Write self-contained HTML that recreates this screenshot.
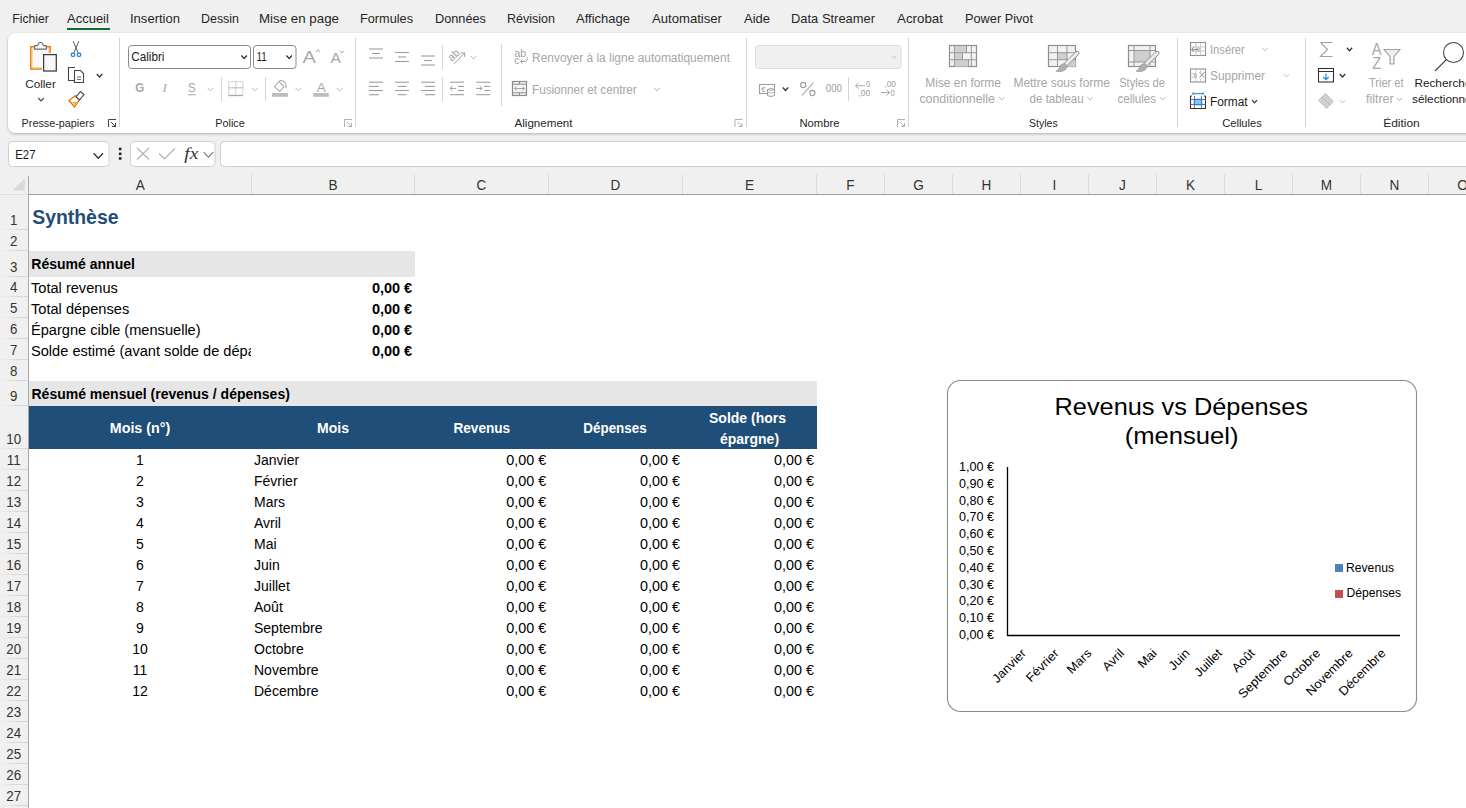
<!DOCTYPE html>
<html><head><meta charset="utf-8"><title>Excel</title>
<style>html,body{margin:0;padding:0;background:#f0f0f0;overflow:hidden}svg{display:block;font-family:"Liberation Sans",sans-serif}</style>
</head><body>
<svg width="1466" height="808" viewBox="0 0 1466 808">
<rect x="0" y="0" width="1466" height="808" fill="#f0f0f0" />
<text x="12.3" y="22.9" font-size="12.6" fill="#262626" textLength="36.4" lengthAdjust="spacingAndGlyphs" >Fichier</text>
<text x="67.1" y="22.9" font-size="12.6" fill="#262626" textLength="41.8" lengthAdjust="spacingAndGlyphs" >Accueil</text>
<text x="130.0" y="22.9" font-size="12.6" fill="#262626" textLength="50.0" lengthAdjust="spacingAndGlyphs" >Insertion</text>
<text x="201.0" y="22.9" font-size="12.6" fill="#262626" textLength="38.0" lengthAdjust="spacingAndGlyphs" >Dessin</text>
<text x="259.0" y="22.9" font-size="12.6" fill="#262626" textLength="80.0" lengthAdjust="spacingAndGlyphs" >Mise en page</text>
<text x="360.0" y="22.9" font-size="12.6" fill="#262626" textLength="53.0" lengthAdjust="spacingAndGlyphs" >Formules</text>
<text x="435.0" y="22.9" font-size="12.6" fill="#262626" textLength="51.0" lengthAdjust="spacingAndGlyphs" >Données</text>
<text x="507.0" y="22.9" font-size="12.6" fill="#262626" textLength="48.0" lengthAdjust="spacingAndGlyphs" >Révision</text>
<text x="576.0" y="22.9" font-size="12.6" fill="#262626" textLength="54.0" lengthAdjust="spacingAndGlyphs" >Affichage</text>
<text x="652.0" y="22.9" font-size="12.6" fill="#262626" textLength="70.0" lengthAdjust="spacingAndGlyphs" >Automatiser</text>
<text x="744.0" y="22.9" font-size="12.6" fill="#262626" textLength="26.0" lengthAdjust="spacingAndGlyphs" >Aide</text>
<text x="791.0" y="22.9" font-size="12.6" fill="#262626" textLength="84.0" lengthAdjust="spacingAndGlyphs" >Data Streamer</text>
<text x="897.0" y="22.9" font-size="12.6" fill="#262626" textLength="46.0" lengthAdjust="spacingAndGlyphs" >Acrobat</text>
<text x="965.0" y="22.9" font-size="12.6" fill="#262626" textLength="68.0" lengthAdjust="spacingAndGlyphs" >Power Pivot</text>
<rect x="67" y="28" width="43" height="2" fill="#0f6b32" />
<defs><filter id="sh" x="-5%" y="-20%" width="110%" height="150%"><feGaussianBlur in="SourceAlpha" stdDeviation="1.6"/><feOffset dy="1.2"/><feComponentTransfer><feFuncA type="linear" slope="0.28"/></feComponentTransfer><feMerge><feMergeNode/><feMergeNode in="SourceGraphic"/></feMerge></filter></defs>
<defs><linearGradient id="rg" x1="0" x2="1" y1="0" y2="0"><stop offset="0" stop-color="#f0f0f0"/><stop offset="0.6" stop-color="#dadada"/><stop offset="1" stop-color="#d6d6d6"/></linearGradient></defs>
<rect x="8" y="33" width="1480" height="100" rx="8" ry="8" fill="#fff" filter="url(#sh)"/>
<line x1="119.5" y1="38" x2="119.5" y2="127" stroke="#d4d4d4" stroke-width="1" />
<line x1="355.5" y1="38" x2="355.5" y2="127" stroke="#d4d4d4" stroke-width="1" />
<line x1="746.5" y1="38" x2="746.5" y2="127" stroke="#d4d4d4" stroke-width="1" />
<line x1="908.5" y1="38" x2="908.5" y2="127" stroke="#d4d4d4" stroke-width="1" />
<line x1="1177.5" y1="38" x2="1177.5" y2="127" stroke="#d4d4d4" stroke-width="1" />
<line x1="1305.5" y1="38" x2="1305.5" y2="127" stroke="#d4d4d4" stroke-width="1" />
<line x1="221.5" y1="77" x2="221.5" y2="101" stroke="#d4d4d4" stroke-width="1" />
<line x1="265.5" y1="77" x2="265.5" y2="101" stroke="#d4d4d4" stroke-width="1" />
<line x1="442.5" y1="45" x2="442.5" y2="69" stroke="#d4d4d4" stroke-width="1" />
<line x1="442.5" y1="77" x2="442.5" y2="101" stroke="#d4d4d4" stroke-width="1" />
<line x1="501.5" y1="44" x2="501.5" y2="106" stroke="#d4d4d4" stroke-width="1" />
<line x1="848.5" y1="77" x2="848.5" y2="101" stroke="#d4d4d4" stroke-width="1" />
<text x="21.6" y="126.7" font-size="10.6" fill="#262626" textLength="72.7" lengthAdjust="spacingAndGlyphs" >Presse-papiers</text>
<text x="215.2" y="126.7" font-size="10.6" fill="#262626" textLength="29.6" lengthAdjust="spacingAndGlyphs" >Police</text>
<text x="514.5" y="126.7" font-size="10.6" fill="#262626" textLength="58.0" lengthAdjust="spacingAndGlyphs" >Alignement</text>
<text x="799.5" y="126.7" font-size="10.6" fill="#262626" textLength="40.0" lengthAdjust="spacingAndGlyphs" >Nombre</text>
<text x="1029.1" y="126.7" font-size="10.6" fill="#262626" textLength="28.6" lengthAdjust="spacingAndGlyphs" >Styles</text>
<text x="1222.2" y="126.7" font-size="10.6" fill="#262626" textLength="39.6" lengthAdjust="spacingAndGlyphs" >Cellules</text>
<text x="1383.2" y="126.7" font-size="10.6" fill="#262626" textLength="36.6" lengthAdjust="spacingAndGlyphs" >Édition</text>
<path d="M108.5 127.0 L108.5 119.5 L116.0 119.5" stroke="#444" fill="none" stroke-width="1" />
<path d="M111.0 122.0 L115.5 126.5 M112.0 126.5 L115.5 126.5 L115.5 123.0" stroke="#444" fill="none" stroke-width="1" />
<path d="M344.5 127.0 L344.5 119.5 L352.0 119.5" stroke="#b0b0b0" fill="none" stroke-width="1" />
<path d="M347.0 122.0 L351.5 126.5 M348.0 126.5 L351.5 126.5 L351.5 123.0" stroke="#b0b0b0" fill="none" stroke-width="1" />
<path d="M735 127.0 L735 119.5 L742.5 119.5" stroke="#b0b0b0" fill="none" stroke-width="1" />
<path d="M737.5 122.0 L742 126.5 M738.5 126.5 L742 126.5 L742 123.0" stroke="#b0b0b0" fill="none" stroke-width="1" />
<path d="M897.5 127.0 L897.5 119.5 L905.0 119.5" stroke="#b0b0b0" fill="none" stroke-width="1" />
<path d="M900.0 122.0 L904.5 126.5 M901.0 126.5 L904.5 126.5 L904.5 123.0" stroke="#b0b0b0" fill="none" stroke-width="1" />
<rect x="30.1" y="46" width="20.7" height="23.7" fill="#e8720c" />
<rect x="31.3" y="47.2" width="18.3" height="21.3" fill="#f9d98c" />
<rect x="32.8" y="48.7" width="15.3" height="18.3" fill="#f8f8f8" />
<rect x="42" y="53" width="16" height="19.6" fill="#fff" />
<rect x="43.6" y="54.6" width="12.7" height="16.4" fill="#f8f8f8" stroke="#3a3a3a" stroke-width="1.25"/>
<path d="M34.6 45.6 H37.5 Q38.5 42.2 40.5 42.2 Q42.5 42.2 43.5 45.6 H46.3 V49.1 H34.6 Z" stroke="#6e6e6e" fill="#fafafa" stroke-width="1.1" />
<text x="25.2" y="87.6" font-size="11.6" fill="#262626" textLength="30.6" lengthAdjust="spacingAndGlyphs" >Coller</text>
<path d="M38.2 98.0 L41.0 101.0 L43.8 98.0" stroke="#444" fill="none" stroke-width="1.1" />
<path d="M73.2 41.2 L78 52.5 M78.8 41.2 L74 52.5" stroke="#555" fill="none" stroke-width="1" />
<circle cx="73" cy="54.8" r="1.8" fill="none" stroke="#2b88d8" stroke-width="1.3"/>
<circle cx="79" cy="54.8" r="1.8" fill="none" stroke="#2b88d8" stroke-width="1.3"/>
<path d="M75 67.5 H68.5 V80.5 H74" stroke="#444" fill="none" stroke-width="1.1" />
<path d="M74.5 70.5 H80.5 L83.5 73.5 V82.5 H74.5 Z" stroke="#444" fill="#fff" stroke-width="1.1" />
<path d="M77 77 H81 M77 79.5 H81" stroke="#555" fill="none" stroke-width="0.9" />
<path d="M96.8 74.0 L99.6 77.0 L102.3 74.0" stroke="#333" fill="none" stroke-width="1.3" />
<path d="M69 100.5 L74.5 107 L80 99 L75.5 95.5 Z" stroke="#e07000" fill="#fff" stroke-width="1.3" />
<path d="M72 102 L75 106 L78 101.5 Z" stroke="none" fill="#f6b24d" stroke-width="1" />
<path d="M76 97 L79.5 100 L84 94.5 L80.5 91.5 Z" stroke="#444" fill="#fff" stroke-width="1.1" />
<rect x="128.5" y="45.5" width="122" height="23" rx="3" fill="#fff" stroke="#8a8a8a" stroke-width="1"/>
<rect x="253.5" y="45.5" width="42.5" height="23" rx="3" fill="#fff" stroke="#8a8a8a" stroke-width="1"/>
<text x="131.2" y="60.7" font-size="12.6" fill="#1a1a1a" textLength="33.3" lengthAdjust="spacingAndGlyphs" >Calibri</text>
<text x="256.5" y="60.7" font-size="12.6" fill="#1a1a1a" textLength="10.3" lengthAdjust="spacingAndGlyphs" >11</text>
<path d="M241.4 55.5 L244.2 58.5 L246.9 55.5" stroke="#333" fill="none" stroke-width="1.3" />
<path d="M286.4 55.5 L289.2 58.5 L291.9 55.5" stroke="#333" fill="none" stroke-width="1.3" />
<text x="302.6" y="63.0" font-size="17" fill="#a8a8a8" textLength="13.4" lengthAdjust="spacingAndGlyphs" >A</text>
<path d="M316 52 L318 49.5 L320 52" stroke="#a8a8a8" fill="none" stroke-width="1" />
<text x="330.5" y="63.0" font-size="14" fill="#a8a8a8" textLength="10.5" lengthAdjust="spacingAndGlyphs" >A</text>
<path d="M340 50.5 L342 53 L344 50.5" stroke="#a8a8a8" fill="none" stroke-width="1" />
<text x="135.2" y="92.3" font-size="12.5" fill="#a8a8a8" font-weight="bold" textLength="9.0" lengthAdjust="spacingAndGlyphs" >G</text>
<text x="162.5" y="92.3" font-size="13" fill="#a8a8a8" font-family="Liberation Serif" font-style="italic">I</text>
<text x="188.0" y="92.3" font-size="12.5" fill="#a8a8a8" textLength="7.8" lengthAdjust="spacingAndGlyphs" >S</text>
<line x1="188" y1="94.8" x2="196" y2="94.8" stroke="#a8a8a8" stroke-width="1" />
<path d="M207.5 87.8 L210.5 90.8 L213.5 87.8" stroke="#b8b8b8" fill="none" stroke-width="1" />
<rect x="228.3" y="81.3" width="1" height="1" fill="#a8a8a8" />
<rect x="230.3" y="81.3" width="1" height="1" fill="#a8a8a8" />
<rect x="232.3" y="81.3" width="1" height="1" fill="#a8a8a8" />
<rect x="234.3" y="81.3" width="1" height="1" fill="#a8a8a8" />
<rect x="236.3" y="81.3" width="1" height="1" fill="#a8a8a8" />
<rect x="238.3" y="81.3" width="1" height="1" fill="#a8a8a8" />
<rect x="240.3" y="81.3" width="1" height="1" fill="#a8a8a8" />
<rect x="242.3" y="81.3" width="1" height="1" fill="#a8a8a8" />
<rect x="228.3" y="83.3" width="1" height="1" fill="#a8a8a8" />
<rect x="242.3" y="83.3" width="1" height="1" fill="#a8a8a8" />
<rect x="228.3" y="85.3" width="1" height="1" fill="#a8a8a8" />
<rect x="242.3" y="85.3" width="1" height="1" fill="#a8a8a8" />
<rect x="228.3" y="87.3" width="1" height="1" fill="#a8a8a8" />
<rect x="230.3" y="87.3" width="1" height="1" fill="#a8a8a8" />
<rect x="232.3" y="87.3" width="1" height="1" fill="#a8a8a8" />
<rect x="234.3" y="87.3" width="1" height="1" fill="#a8a8a8" />
<rect x="236.3" y="87.3" width="1" height="1" fill="#a8a8a8" />
<rect x="238.3" y="87.3" width="1" height="1" fill="#a8a8a8" />
<rect x="240.3" y="87.3" width="1" height="1" fill="#a8a8a8" />
<rect x="242.3" y="87.3" width="1" height="1" fill="#a8a8a8" />
<rect x="228.3" y="89.3" width="1" height="1" fill="#a8a8a8" />
<rect x="242.3" y="89.3" width="1" height="1" fill="#a8a8a8" />
<rect x="228.3" y="91.3" width="1" height="1" fill="#a8a8a8" />
<rect x="242.3" y="91.3" width="1" height="1" fill="#a8a8a8" />
<rect x="228.3" y="93.3" width="1" height="1" fill="#a8a8a8" />
<rect x="242.3" y="93.3" width="1" height="1" fill="#a8a8a8" />
<rect x="235.3" y="81.3" width="1" height="1" fill="#a8a8a8" />
<rect x="235.3" y="83.3" width="1" height="1" fill="#a8a8a8" />
<rect x="235.3" y="85.3" width="1" height="1" fill="#a8a8a8" />
<rect x="235.3" y="87.3" width="1" height="1" fill="#a8a8a8" />
<rect x="235.3" y="89.3" width="1" height="1" fill="#a8a8a8" />
<rect x="235.3" y="91.3" width="1" height="1" fill="#a8a8a8" />
<rect x="235.3" y="93.3" width="1" height="1" fill="#a8a8a8" />
<rect x="228.3" y="87.3" width="1" height="1" fill="#a8a8a8" />
<rect x="230.3" y="87.3" width="1" height="1" fill="#a8a8a8" />
<rect x="232.3" y="87.3" width="1" height="1" fill="#a8a8a8" />
<rect x="234.3" y="87.3" width="1" height="1" fill="#a8a8a8" />
<rect x="236.3" y="87.3" width="1" height="1" fill="#a8a8a8" />
<rect x="238.3" y="87.3" width="1" height="1" fill="#a8a8a8" />
<rect x="240.3" y="87.3" width="1" height="1" fill="#a8a8a8" />
<rect x="242.3" y="87.3" width="1" height="1" fill="#a8a8a8" />
<line x1="228.3" y1="95.5" x2="242.8" y2="95.5" stroke="#a8a8a8" stroke-width="1.3" />
<path d="M251.7 87.8 L254.7 90.8 L257.7 87.8" stroke="#b8b8b8" fill="none" stroke-width="1" />
<path d="M274.5 86.5 L279 81.5 L284 86.5 L279.5 91.5 Z" stroke="#a8a8a8" fill="none" stroke-width="1.1" />
<path d="M279 81.5 Q281 79 285 82.5 Q286.5 84.5 286 88" stroke="#a8a8a8" fill="none" stroke-width="1.1" />
<rect x="272" y="93" width="16" height="3.8" fill="#bdbdbd" />
<path d="M295.4 87.8 L298.4 90.8 L301.4 87.8" stroke="#b8b8b8" fill="none" stroke-width="1" />
<text x="316.8" y="91.5" font-size="13" fill="#a8a8a8" textLength="9.0" lengthAdjust="spacingAndGlyphs" >A</text>
<rect x="313.3" y="93" width="15.5" height="3.8" fill="#bdbdbd" />
<path d="M336.6 87.8 L339.6 90.8 L342.6 87.8" stroke="#b8b8b8" fill="none" stroke-width="1" />
<line x1="369" y1="49" x2="383" y2="49" stroke="#9e9e9e" stroke-width="1.1" />
<line x1="372" y1="53.5" x2="380" y2="53.5" stroke="#9e9e9e" stroke-width="1.1" />
<line x1="369" y1="58" x2="383" y2="58" stroke="#9e9e9e" stroke-width="1.1" />
<line x1="395" y1="52.5" x2="409" y2="52.5" stroke="#9e9e9e" stroke-width="1.1" />
<line x1="398" y1="57" x2="406" y2="57" stroke="#9e9e9e" stroke-width="1.1" />
<line x1="395" y1="61.5" x2="409" y2="61.5" stroke="#9e9e9e" stroke-width="1.1" />
<line x1="421" y1="56" x2="435" y2="56" stroke="#9e9e9e" stroke-width="1.1" />
<line x1="424" y1="60.5" x2="432" y2="60.5" stroke="#9e9e9e" stroke-width="1.1" />
<line x1="421" y1="65" x2="435" y2="65" stroke="#9e9e9e" stroke-width="1.1" />
<line x1="369" y1="82.2" x2="383" y2="82.2" stroke="#9e9e9e" stroke-width="1.1" />
<line x1="369" y1="86.4" x2="379" y2="86.4" stroke="#9e9e9e" stroke-width="1.1" />
<line x1="369" y1="90.5" x2="383" y2="90.5" stroke="#9e9e9e" stroke-width="1.1" />
<line x1="369" y1="94.7" x2="379" y2="94.7" stroke="#9e9e9e" stroke-width="1.1" />
<line x1="395" y1="82.2" x2="409" y2="82.2" stroke="#9e9e9e" stroke-width="1.1" />
<line x1="397.5" y1="86.4" x2="406.5" y2="86.4" stroke="#9e9e9e" stroke-width="1.1" />
<line x1="395" y1="90.5" x2="409" y2="90.5" stroke="#9e9e9e" stroke-width="1.1" />
<line x1="397.5" y1="94.7" x2="406.5" y2="94.7" stroke="#9e9e9e" stroke-width="1.1" />
<line x1="421" y1="82.2" x2="435" y2="82.2" stroke="#9e9e9e" stroke-width="1.1" />
<line x1="425" y1="86.4" x2="435" y2="86.4" stroke="#9e9e9e" stroke-width="1.1" />
<line x1="421" y1="90.5" x2="435" y2="90.5" stroke="#9e9e9e" stroke-width="1.1" />
<line x1="425" y1="94.7" x2="435" y2="94.7" stroke="#9e9e9e" stroke-width="1.1" />
<text x="0" y="0" font-size="11" fill="#9e9e9e" transform="translate(451.8 62) rotate(-45)">ab</text>
<path d="M454.3 63.7 L464.7 52.9 M460.5 53 L464.7 52.9 L464.6 57" stroke="#9e9e9e" fill="none" stroke-width="1" />
<path d="M470.8 56.0 L473.5 59.0 L476.2 56.0" stroke="#b8b8b8" fill="none" stroke-width="1" />
<line x1="450" y1="82.2" x2="464" y2="82.2" stroke="#9e9e9e" stroke-width="1.1" />
<line x1="458" y1="86.4" x2="464" y2="86.4" stroke="#9e9e9e" stroke-width="1.1" />
<line x1="458" y1="90.5" x2="464" y2="90.5" stroke="#9e9e9e" stroke-width="1.1" />
<line x1="450" y1="94.7" x2="464" y2="94.7" stroke="#9e9e9e" stroke-width="1.1" />
<path d="M456 88.4 H450 M452.5 86 L450 88.4 L452.5 90.8" stroke="#9e9e9e" fill="none" stroke-width="1" />
<line x1="476.2" y1="82.2" x2="490.2" y2="82.2" stroke="#9e9e9e" stroke-width="1.1" />
<line x1="484.2" y1="86.4" x2="490.2" y2="86.4" stroke="#9e9e9e" stroke-width="1.1" />
<line x1="484.2" y1="90.5" x2="490.2" y2="90.5" stroke="#9e9e9e" stroke-width="1.1" />
<line x1="476.2" y1="94.7" x2="490.2" y2="94.7" stroke="#9e9e9e" stroke-width="1.1" />
<path d="M476.2 88.4 H482.2 M479.7 86 L482.2 88.4 L479.7 90.8" stroke="#9e9e9e" fill="none" stroke-width="1" />
<text x="514.3" y="56.8" font-size="10" fill="#9e9e9e" textLength="12.0" lengthAdjust="spacingAndGlyphs" >ab</text>
<text x="514.3" y="63.9" font-size="10" fill="#9e9e9e" >c</text>
<path d="M527 57.5 Q528.5 61.5 523.5 61.5 H520.5 M522.5 59.5 L520.5 61.5 L522.5 63.5" stroke="#9e9e9e" fill="none" stroke-width="1" />
<text x="532.0" y="62.0" font-size="12" fill="#a6a6a6" textLength="198.0" lengthAdjust="spacingAndGlyphs" >Renvoyer à la ligne automatiquement</text>
<rect x="512.5" y="81.5" width="14" height="14" fill="#f4f4f4" stroke="#8c8c8c" stroke-width="1.2"/>
<line x1="512.5" y1="84.2" x2="526.5" y2="84.2" stroke="#8c8c8c" stroke-width="1" />
<line x1="512.5" y1="92.8" x2="526.5" y2="92.8" stroke="#8c8c8c" stroke-width="1" />
<line x1="519.5" y1="81.5" x2="519.5" y2="84.2" stroke="#8c8c8c" stroke-width="1" />
<line x1="519.5" y1="92.8" x2="519.5" y2="95.5" stroke="#8c8c8c" stroke-width="1" />
<path d="M514.5 88.5 H524.5 M516.5 86.5 L514.5 88.5 L516.5 90.5 M522.5 86.5 L524.5 88.5 L522.5 90.5" stroke="#9a9a9a" fill="none" stroke-width="0.9" />
<text x="532.0" y="93.6" font-size="12" fill="#a6a6a6" textLength="104.7" lengthAdjust="spacingAndGlyphs" >Fusionner et centrer</text>
<path d="M654.2 88.0 L657.0 91.0 L659.8 88.0" stroke="#b8b8b8" fill="none" stroke-width="1" />
<rect x="755.5" y="45.5" width="145.5" height="23" rx="3" fill="#f0f0f0" stroke="#dedede" stroke-width="1"/>
<path d="M891.5 55.7 L894.0 58.3 L896.5 55.7" stroke="#c0c0c0" fill="none" stroke-width="1" />
<rect x="759.5" y="84.5" width="15" height="9" fill="none" stroke="#9e9e9e" stroke-width="1.1"/>
<text x="761.3" y="91.8" font-size="7.5" fill="#9e9e9e" >€</text>
<path d="M767.5 89.5 Q771 87.5 774.5 89.5 V95.5 Q771 97.5 767.5 95.5 Z" stroke="#9e9e9e" fill="#fff" stroke-width="1" />
<path d="M767.5 89.5 Q771 91.5 774.5 89.5 M767.5 92 Q771 94 774.5 92" stroke="#9e9e9e" fill="none" stroke-width="0.8" />
<path d="M782.8 87.5 L785.5 90.5 L788.2 87.5" stroke="#333" fill="none" stroke-width="1.3" />
<circle cx="803.2" cy="85" r="2.6" fill="none" stroke="#9e9e9e" stroke-width="1.1"/>
<circle cx="812.4" cy="93" r="2.6" fill="none" stroke="#9e9e9e" stroke-width="1.1"/>
<line x1="813.5" y1="82.5" x2="802" y2="95.5" stroke="#9e9e9e" stroke-width="1.1" />
<text x="825.8" y="92.0" font-size="10" fill="#9e9e9e" textLength="16.2" lengthAdjust="spacingAndGlyphs" >000</text>
<text x="865.9" y="87.4" font-size="8.4" fill="#9e9e9e" textLength="4.3" lengthAdjust="spacingAndGlyphs" >0</text>
<text x="858.3" y="95.8" font-size="8.4" fill="#9e9e9e" textLength="11.9" lengthAdjust="spacingAndGlyphs" >,00</text>
<path d="M865 85.7 H855.5 M858.5 82.7 L855.5 85.7 L858.5 88.7" stroke="#9e9e9e" fill="none" stroke-width="0.9" />
<text x="884.4" y="87.4" font-size="8.4" fill="#9e9e9e" textLength="11.6" lengthAdjust="spacingAndGlyphs" >,00</text>
<text x="890.5" y="95.8" font-size="8.4" fill="#9e9e9e" textLength="4.3" lengthAdjust="spacingAndGlyphs" >0</text>
<path d="M881 92.6 H889.6 M886.6 89.6 L889.6 92.6 L886.6 95.6" stroke="#9e9e9e" fill="none" stroke-width="0.9" />
<rect x="949.5" y="45.5" width="27" height="21" fill="#f2f2f2" stroke="#8f8f8f" stroke-width="1.2"/>
<rect x="954.5" y="46" width="12" height="6.5" fill="#cfcfcf" />
<rect x="954.5" y="53" width="8" height="6.5" fill="#cfcfcf" />
<rect x="954.5" y="60" width="14" height="6.5" fill="#cfcfcf" />
<line x1="949.5" y1="52.7" x2="976.5" y2="52.7" stroke="#8f8f8f" stroke-width="0.9" />
<line x1="949.5" y1="59.7" x2="976.5" y2="59.7" stroke="#8f8f8f" stroke-width="0.9" />
<line x1="954.4" y1="45.5" x2="954.4" y2="66.5" stroke="#8f8f8f" stroke-width="0.9" />
<line x1="971.4" y1="45.5" x2="971.4" y2="66.5" stroke="#8f8f8f" stroke-width="0.9" />
<line x1="966.5" y1="45.5" x2="966.5" y2="52.7" stroke="#8f8f8f" stroke-width="0.9" />
<line x1="962.5" y1="52.7" x2="962.5" y2="59.7" stroke="#8f8f8f" stroke-width="0.9" />
<line x1="968.5" y1="59.7" x2="968.5" y2="66.5" stroke="#8f8f8f" stroke-width="0.9" />
<rect x="1048.5" y="45.5" width="27" height="21" fill="#f2f2f2" stroke="#8f8f8f" stroke-width="1.2"/>
<rect x="1057.5" y="52.7" width="9.5" height="7" fill="#cfcfcf" />
<rect x="1067" y="59.7" width="8.5" height="7" fill="#cfcfcf" />
<line x1="1048.5" y1="52.7" x2="1075.5" y2="52.7" stroke="#8f8f8f" stroke-width="0.9" />
<line x1="1048.5" y1="59.7" x2="1075.5" y2="59.7" stroke="#8f8f8f" stroke-width="0.9" />
<line x1="1057.5" y1="45.5" x2="1057.5" y2="66.5" stroke="#8f8f8f" stroke-width="0.9" />
<line x1="1067" y1="45.5" x2="1067" y2="66.5" stroke="#8f8f8f" stroke-width="0.9" />
<path d="M1078.5 51.5 Q1080 53 1078 55 L1066 66.5 L1063.5 64 L1075 52.5 Q1077 50.5 1078.5 51.5 Z" stroke="#8f8f8f" fill="#ececec" stroke-width="1" />
<path d="M1065 63.5 Q1060 64 1059 68.5 Q1058 70.5 1056 71 Q1062 72.5 1065.5 69.5 Q1067.5 67.5 1066.5 66 Z" stroke="#9a9a9a" fill="#b0b0b0" stroke-width="0.8" />
<rect x="1128.5" y="45.5" width="27" height="21" fill="#f2f2f2" stroke="#8f8f8f" stroke-width="1.2"/>
<rect x="1134" y="50.5" width="16" height="11.5" fill="#cfcfcf" />
<line x1="1128.5" y1="50.5" x2="1155.5" y2="50.5" stroke="#8f8f8f" stroke-width="0.9" />
<line x1="1128.5" y1="62" x2="1155.5" y2="62" stroke="#8f8f8f" stroke-width="0.9" />
<line x1="1134" y1="45.5" x2="1134" y2="66.5" stroke="#8f8f8f" stroke-width="0.9" />
<line x1="1150" y1="45.5" x2="1150" y2="66.5" stroke="#8f8f8f" stroke-width="0.9" />
<path d="M1158.5 51.5 Q1160 53 1158 55 L1146 66.5 L1143.5 64 L1155 52.5 Q1157 50.5 1158.5 51.5 Z" stroke="#8f8f8f" fill="#ececec" stroke-width="1" />
<path d="M1145 63.5 Q1140 64 1139 68.5 Q1138 70.5 1136 71 Q1142 72.5 1145.5 69.5 Q1147.5 67.5 1146.5 66 Z" stroke="#9a9a9a" fill="#b0b0b0" stroke-width="0.8" />
<text x="925.3" y="87.4" font-size="12" fill="#a6a6a6" textLength="75.6" lengthAdjust="spacingAndGlyphs" >Mise en forme</text>
<text x="919.4" y="102.8" font-size="12" fill="#a6a6a6" textLength="75.6" lengthAdjust="spacingAndGlyphs" >conditionnelle</text>
<path d="M999.3 97.2 L1001.8 99.8 L1004.3 97.2" stroke="#b0b0b0" fill="none" stroke-width="1" />
<text x="1013.4" y="87.4" font-size="12" fill="#a6a6a6" textLength="96.6" lengthAdjust="spacingAndGlyphs" >Mettre sous forme</text>
<text x="1029.6" y="102.8" font-size="12" fill="#a6a6a6" textLength="54.0" lengthAdjust="spacingAndGlyphs" >de tableau</text>
<path d="M1087.5 97.2 L1090.0 99.8 L1092.5 97.2" stroke="#b0b0b0" fill="none" stroke-width="1" />
<text x="1119.2" y="87.4" font-size="12" fill="#a6a6a6" textLength="45.8" lengthAdjust="spacingAndGlyphs" >Styles de</text>
<text x="1117.6" y="102.8" font-size="12" fill="#a6a6a6" textLength="38.4" lengthAdjust="spacingAndGlyphs" >cellules</text>
<path d="M1160.0 97.2 L1162.5 99.8 L1165.0 97.2" stroke="#b0b0b0" fill="none" stroke-width="1" />
<rect x="1190.5" y="42.5" width="15" height="13" fill="none" stroke="#8f8f8f" stroke-width="1.1"/>
<line x1="1190.5" y1="46.9" x2="1205.5" y2="46.9" stroke="#c4c4c4" stroke-width="0.9" />
<line x1="1190.5" y1="51.1" x2="1205.5" y2="51.1" stroke="#c4c4c4" stroke-width="0.9" />
<line x1="1195.8" y1="42.5" x2="1195.8" y2="55.5" stroke="#c4c4c4" stroke-width="0.9" />
<line x1="1200.6" y1="42.5" x2="1200.6" y2="55.5" stroke="#c4c4c4" stroke-width="0.9" />
<rect x="1196.3" y="47.4" width="4" height="4.7" fill="#c8c8c8" />
<path d="M1198 49.5 H1191.5 M1194 47 L1191.5 49.5 L1194 52" stroke="#8f8f8f" fill="none" stroke-width="1" />
<text x="1210.0" y="53.7" font-size="12" fill="#a6a6a6" textLength="34.8" lengthAdjust="spacingAndGlyphs" >Insérer</text>
<path d="M1262.5 48.2 L1265.0 50.8 L1267.5 48.2" stroke="#b8b8b8" fill="none" stroke-width="1" />
<rect x="1190.5" y="69.0" width="15" height="13" fill="none" stroke="#8f8f8f" stroke-width="1.1"/>
<line x1="1190.5" y1="73.4" x2="1205.5" y2="73.4" stroke="#c4c4c4" stroke-width="0.9" />
<line x1="1190.5" y1="77.6" x2="1205.5" y2="77.6" stroke="#c4c4c4" stroke-width="0.9" />
<line x1="1195.8" y1="69.0" x2="1195.8" y2="82.0" stroke="#c4c4c4" stroke-width="0.9" />
<line x1="1200.6" y1="69.0" x2="1200.6" y2="82.0" stroke="#c4c4c4" stroke-width="0.9" />
<rect x="1193.5" y="73.9" width="3.5" height="3.7" fill="#c8c8c8" />
<rect x="1197" y="72" width="8" height="6.5" fill="#fff" />
<path d="M1199.5 72 L1204.5 77.5 M1204.5 72 L1199.5 77.5" stroke="#8f8f8f" fill="none" stroke-width="1" />
<text x="1210.0" y="79.5" font-size="12" fill="#a6a6a6" textLength="55.0" lengthAdjust="spacingAndGlyphs" >Supprimer</text>
<path d="M1284.0 74.2 L1286.5 76.8 L1289.0 74.2" stroke="#b8b8b8" fill="none" stroke-width="1" />
<path d="M1190.5 96 V108.5 H1205.5 V96 M1190.5 96 H1192 M1204 96 H1205.5" stroke="#333" fill="none" stroke-width="1.1" />
<line x1="1190.5" y1="99.5" x2="1205.5" y2="99.5" stroke="#555" stroke-width="0.8" />
<line x1="1190.5" y1="104.5" x2="1205.5" y2="104.5" stroke="#555" stroke-width="0.8" />
<line x1="1194.5" y1="96" x2="1194.5" y2="108.5" stroke="#555" stroke-width="0.8" />
<line x1="1201.5" y1="96" x2="1201.5" y2="108.5" stroke="#555" stroke-width="0.8" />
<rect x="1194.3" y="99.3" width="7.4" height="5.4" fill="#8cc0ee" stroke="#1e7bd6" stroke-width="1.1"/>
<path d="M1193 93.7 H1203 M1193 92.3 V95 M1203 92.3 V95" stroke="#1e7bd6" fill="none" stroke-width="1" />
<text x="1210.0" y="105.8" font-size="12" fill="#1a1a1a" textLength="37.6" lengthAdjust="spacingAndGlyphs" >Format</text>
<path d="M1252.0 100.1 L1254.5 102.9 L1257.0 100.1" stroke="#333" fill="none" stroke-width="1.2" />
<path d="M1320.5 42.5 H1332.5 M1320.5 42.5 L1327.5 49.5 L1320.5 56.5 H1332.5" stroke="#a0a0a0" fill="none" stroke-width="1.1" />
<path d="M1346.8 47.8 L1349.5 50.8 L1352.2 47.8" stroke="#333" fill="none" stroke-width="1.3" />
<rect x="1318.5" y="68.5" width="15" height="13.5" fill="none" stroke="#333" stroke-width="1.1"/>
<line x1="1318.5" y1="71.5" x2="1333.5" y2="71.5" stroke="#333" stroke-width="1" />
<path d="M1326 73.5 V79.5 M1323.3 77 L1326 79.7 L1328.7 77" stroke="#1e88e5" fill="none" stroke-width="1.2" />
<path d="M1339.8 74.0 L1342.5 77.0 L1345.2 74.0" stroke="#333" fill="none" stroke-width="1.3" />
<path d="M1318.5 100.5 L1325.5 93.5 L1333.5 101.5 L1326.5 108.5 Z" stroke="#b8b8b8" fill="#d0d0d0" stroke-width="0.8" />
<line x1="1322" y1="97" x2="1330" y2="105" stroke="#b8b8b8" stroke-width="1" />
<path d="M1339.8 100.0 L1342.5 103.0 L1345.2 100.0" stroke="#c0c0c0" fill="none" stroke-width="1" />
<text x="1371.8" y="54.6" font-size="16" fill="#a8a8a8" textLength="9.8" lengthAdjust="spacingAndGlyphs" >A</text>
<text x="1372.2" y="68.8" font-size="16" fill="#a8a8a8" textLength="8.8" lengthAdjust="spacingAndGlyphs" >Z</text>
<path d="M1384 49.5 H1400 L1394 56.5 V64 H1390 V56.5 Z" stroke="#a0a0a0" fill="#f0f0f0" stroke-width="1.1" />
<text x="1369.0" y="87.0" font-size="12" fill="#a6a6a6" textLength="34.5" lengthAdjust="spacingAndGlyphs" >Trier et</text>
<text x="1366.0" y="102.5" font-size="12" fill="#a6a6a6" textLength="27.6" lengthAdjust="spacingAndGlyphs" >filtrer</text>
<path d="M1397.0 98.0 L1399.5 100.6 L1402.0 98.0" stroke="#b0b0b0" fill="none" stroke-width="1" />
<circle cx="1453.5" cy="52.5" r="10" fill="none" stroke="#444" stroke-width="1.1"/>
<line x1="1446.5" y1="59.5" x2="1435" y2="71" stroke="#444" stroke-width="1.1" />
<text x="1414.4" y="87.0" font-size="11.8" fill="#1a1a1a" >Rechercher et</text>
<text x="1412.0" y="102.5" font-size="11.8" fill="#1a1a1a" >sélectionner</text>
<rect x="8.5" y="141.5" width="100.5" height="25" rx="4" fill="#fff" stroke="#d0d0d0" stroke-width="1"/>
<text x="15.3" y="159.2" font-size="13.6" fill="#1a1a1a" textLength="20.2" lengthAdjust="spacingAndGlyphs" >E27</text>
<path d="M93.6 153.2 L98.3 158.2 L103.0 153.2" stroke="#333" fill="none" stroke-width="1.3" />
<rect x="118.9" y="147.70000000000002" width="2.6" height="2.5" fill="#222" />
<rect x="118.9" y="152.60000000000002" width="2.6" height="2.5" fill="#222" />
<rect x="118.9" y="157.20000000000002" width="2.6" height="2.5" fill="#222" />
<rect x="130.5" y="141.5" width="84.5" height="25" rx="4" fill="#fff" stroke="#d0d0d0" stroke-width="1"/>
<path d="M137 148 L149 159.5 M149 148 L137 159.5" stroke="#b0b0b0" fill="none" stroke-width="1.1" />
<path d="M159 153.5 L164.5 159 L174.8 148.5" stroke="#b0b0b0" fill="none" stroke-width="1.1" />
<text x="184.3" y="158.6" font-size="17" font-family="Liberation Serif" font-style="italic" fill="#333" textLength="14" lengthAdjust="spacingAndGlyphs">fx</text>
<path d="M203.7 152.2 L208.4 157.2 L213.2 152.2" stroke="#777" fill="none" stroke-width="1.1" />
<rect x="220.5" y="141.5" width="1300" height="25" rx="4" fill="#fff" stroke="#d0d0d0" stroke-width="1"/>
<path d="M24.8 178.2 V190.5 H12.8 Z" stroke="none" fill="#d9d9d9" stroke-width="1" />
<text x="140.2" y="190.0" font-size="14" fill="#333" text-anchor="middle" textLength="9.1" lengthAdjust="spacingAndGlyphs" >A</text>
<line x1="251.5" y1="174.5" x2="251.5" y2="194" stroke="#dcdcdc" stroke-width="1" />
<text x="333.0" y="190.0" font-size="14" fill="#333" text-anchor="middle" textLength="9.1" lengthAdjust="spacingAndGlyphs" >B</text>
<line x1="414.5" y1="174.5" x2="414.5" y2="194" stroke="#dcdcdc" stroke-width="1" />
<text x="481.5" y="190.0" font-size="14" fill="#333" text-anchor="middle" textLength="9.8" lengthAdjust="spacingAndGlyphs" >C</text>
<line x1="548.5" y1="174.5" x2="548.5" y2="194" stroke="#dcdcdc" stroke-width="1" />
<text x="615.5" y="190.0" font-size="14" fill="#333" text-anchor="middle" textLength="9.8" lengthAdjust="spacingAndGlyphs" >D</text>
<line x1="682.5" y1="174.5" x2="682.5" y2="194" stroke="#dcdcdc" stroke-width="1" />
<text x="749.5" y="190.0" font-size="14" fill="#333" text-anchor="middle" textLength="9.1" lengthAdjust="spacingAndGlyphs" >E</text>
<line x1="816.5" y1="174.5" x2="816.5" y2="194" stroke="#dcdcdc" stroke-width="1" />
<text x="850.5" y="190.0" font-size="14" fill="#333" text-anchor="middle" textLength="8.3" lengthAdjust="spacingAndGlyphs" >F</text>
<line x1="884.5" y1="174.5" x2="884.5" y2="194" stroke="#dcdcdc" stroke-width="1" />
<text x="918.5" y="190.0" font-size="14" fill="#333" text-anchor="middle" textLength="10.6" lengthAdjust="spacingAndGlyphs" >G</text>
<line x1="952.5" y1="174.5" x2="952.5" y2="194" stroke="#dcdcdc" stroke-width="1" />
<text x="986.5" y="190.0" font-size="14" fill="#333" text-anchor="middle" textLength="9.8" lengthAdjust="spacingAndGlyphs" >H</text>
<line x1="1020.5" y1="174.5" x2="1020.5" y2="194" stroke="#dcdcdc" stroke-width="1" />
<text x="1054.5" y="190.0" font-size="14" fill="#333" text-anchor="middle" textLength="3.8" lengthAdjust="spacingAndGlyphs" >I</text>
<line x1="1088.5" y1="174.5" x2="1088.5" y2="194" stroke="#dcdcdc" stroke-width="1" />
<text x="1122.5" y="190.0" font-size="14" fill="#333" text-anchor="middle" textLength="6.8" lengthAdjust="spacingAndGlyphs" >J</text>
<line x1="1156.5" y1="174.5" x2="1156.5" y2="194" stroke="#dcdcdc" stroke-width="1" />
<text x="1190.5" y="190.0" font-size="14" fill="#333" text-anchor="middle" textLength="9.1" lengthAdjust="spacingAndGlyphs" >K</text>
<line x1="1224.5" y1="174.5" x2="1224.5" y2="194" stroke="#dcdcdc" stroke-width="1" />
<text x="1258.5" y="190.0" font-size="14" fill="#333" text-anchor="middle" textLength="7.6" lengthAdjust="spacingAndGlyphs" >L</text>
<line x1="1292.5" y1="174.5" x2="1292.5" y2="194" stroke="#dcdcdc" stroke-width="1" />
<text x="1326.5" y="190.0" font-size="14" fill="#333" text-anchor="middle" textLength="11.3" lengthAdjust="spacingAndGlyphs" >M</text>
<line x1="1360.5" y1="174.5" x2="1360.5" y2="194" stroke="#dcdcdc" stroke-width="1" />
<text x="1394.5" y="190.0" font-size="14" fill="#333" text-anchor="middle" textLength="9.8" lengthAdjust="spacingAndGlyphs" >N</text>
<line x1="1428.5" y1="174.5" x2="1428.5" y2="194" stroke="#dcdcdc" stroke-width="1" />
<text x="1462.5" y="190.0" font-size="14" fill="#333" text-anchor="middle" textLength="10.6" lengthAdjust="spacingAndGlyphs" >O</text>
<line x1="0" y1="194.5" x2="28" y2="194.5" stroke="#e0e0e0" stroke-width="1" />
<line x1="28" y1="194.5" x2="1466" y2="194.5" stroke="#a0a0a0" stroke-width="1" />
<rect x="29" y="195" width="1437" height="613" fill="#fff" />
<line x1="28.5" y1="176" x2="28.5" y2="808" stroke="#a8a8a8" stroke-width="1" />
<rect x="0" y="229" width="28" height="1" fill="url(#rg)"/>
<text x="13.8" y="225.0" font-size="14" fill="#333" text-anchor="middle" textLength="7.4" lengthAdjust="spacingAndGlyphs" >1</text>
<rect x="0" y="250" width="28" height="1" fill="url(#rg)"/>
<text x="13.8" y="246.0" font-size="14" fill="#333" text-anchor="middle" textLength="7.4" lengthAdjust="spacingAndGlyphs" >2</text>
<rect x="0" y="276" width="28" height="1" fill="url(#rg)"/>
<text x="13.8" y="272.0" font-size="14" fill="#333" text-anchor="middle" textLength="7.4" lengthAdjust="spacingAndGlyphs" >3</text>
<rect x="0" y="296" width="28" height="1" fill="url(#rg)"/>
<text x="13.8" y="292.0" font-size="14" fill="#333" text-anchor="middle" textLength="7.4" lengthAdjust="spacingAndGlyphs" >4</text>
<rect x="0" y="317" width="28" height="1" fill="url(#rg)"/>
<text x="13.8" y="313.0" font-size="14" fill="#333" text-anchor="middle" textLength="7.4" lengthAdjust="spacingAndGlyphs" >5</text>
<rect x="0" y="338" width="28" height="1" fill="url(#rg)"/>
<text x="13.8" y="334.0" font-size="14" fill="#333" text-anchor="middle" textLength="7.4" lengthAdjust="spacingAndGlyphs" >6</text>
<rect x="0" y="359" width="28" height="1" fill="url(#rg)"/>
<text x="13.8" y="355.0" font-size="14" fill="#333" text-anchor="middle" textLength="7.4" lengthAdjust="spacingAndGlyphs" >7</text>
<rect x="0" y="380" width="28" height="1" fill="url(#rg)"/>
<text x="13.8" y="376.0" font-size="14" fill="#333" text-anchor="middle" textLength="7.4" lengthAdjust="spacingAndGlyphs" >8</text>
<rect x="0" y="405" width="28" height="1" fill="url(#rg)"/>
<text x="13.8" y="401.0" font-size="14" fill="#333" text-anchor="middle" textLength="7.4" lengthAdjust="spacingAndGlyphs" >9</text>
<rect x="0" y="448" width="28" height="1" fill="url(#rg)"/>
<text x="13.8" y="444.0" font-size="14" fill="#333" text-anchor="middle" textLength="14.9" lengthAdjust="spacingAndGlyphs" >10</text>
<rect x="0" y="469" width="28" height="1" fill="url(#rg)"/>
<text x="13.8" y="465.0" font-size="14" fill="#333" text-anchor="middle" textLength="13.9" lengthAdjust="spacingAndGlyphs" >11</text>
<rect x="0" y="490" width="28" height="1" fill="url(#rg)"/>
<text x="13.8" y="486.0" font-size="14" fill="#333" text-anchor="middle" textLength="14.9" lengthAdjust="spacingAndGlyphs" >12</text>
<rect x="0" y="511" width="28" height="1" fill="url(#rg)"/>
<text x="13.8" y="507.0" font-size="14" fill="#333" text-anchor="middle" textLength="14.9" lengthAdjust="spacingAndGlyphs" >13</text>
<rect x="0" y="532" width="28" height="1" fill="url(#rg)"/>
<text x="13.8" y="528.0" font-size="14" fill="#333" text-anchor="middle" textLength="14.9" lengthAdjust="spacingAndGlyphs" >14</text>
<rect x="0" y="553" width="28" height="1" fill="url(#rg)"/>
<text x="13.8" y="549.0" font-size="14" fill="#333" text-anchor="middle" textLength="14.9" lengthAdjust="spacingAndGlyphs" >15</text>
<rect x="0" y="574" width="28" height="1" fill="url(#rg)"/>
<text x="13.8" y="570.0" font-size="14" fill="#333" text-anchor="middle" textLength="14.9" lengthAdjust="spacingAndGlyphs" >16</text>
<rect x="0" y="595" width="28" height="1" fill="url(#rg)"/>
<text x="13.8" y="591.0" font-size="14" fill="#333" text-anchor="middle" textLength="14.9" lengthAdjust="spacingAndGlyphs" >17</text>
<rect x="0" y="616" width="28" height="1" fill="url(#rg)"/>
<text x="13.8" y="612.0" font-size="14" fill="#333" text-anchor="middle" textLength="14.9" lengthAdjust="spacingAndGlyphs" >18</text>
<rect x="0" y="637" width="28" height="1" fill="url(#rg)"/>
<text x="13.8" y="633.0" font-size="14" fill="#333" text-anchor="middle" textLength="14.9" lengthAdjust="spacingAndGlyphs" >19</text>
<rect x="0" y="658" width="28" height="1" fill="url(#rg)"/>
<text x="13.8" y="654.0" font-size="14" fill="#333" text-anchor="middle" textLength="14.9" lengthAdjust="spacingAndGlyphs" >20</text>
<rect x="0" y="679" width="28" height="1" fill="url(#rg)"/>
<text x="13.8" y="675.0" font-size="14" fill="#333" text-anchor="middle" textLength="14.9" lengthAdjust="spacingAndGlyphs" >21</text>
<rect x="0" y="700" width="28" height="1" fill="url(#rg)"/>
<text x="13.8" y="696.0" font-size="14" fill="#333" text-anchor="middle" textLength="14.9" lengthAdjust="spacingAndGlyphs" >22</text>
<rect x="0" y="721" width="28" height="1" fill="url(#rg)"/>
<text x="13.8" y="717.0" font-size="14" fill="#333" text-anchor="middle" textLength="14.9" lengthAdjust="spacingAndGlyphs" >23</text>
<rect x="0" y="742" width="28" height="1" fill="url(#rg)"/>
<text x="13.8" y="738.0" font-size="14" fill="#333" text-anchor="middle" textLength="14.9" lengthAdjust="spacingAndGlyphs" >24</text>
<rect x="0" y="763" width="28" height="1" fill="url(#rg)"/>
<text x="13.8" y="759.0" font-size="14" fill="#333" text-anchor="middle" textLength="14.9" lengthAdjust="spacingAndGlyphs" >25</text>
<rect x="0" y="784" width="28" height="1" fill="url(#rg)"/>
<text x="13.8" y="780.0" font-size="14" fill="#333" text-anchor="middle" textLength="14.9" lengthAdjust="spacingAndGlyphs" >26</text>
<rect x="0" y="805" width="28" height="1" fill="url(#rg)"/>
<text x="13.8" y="801.0" font-size="14" fill="#333" text-anchor="middle" textLength="14.9" lengthAdjust="spacingAndGlyphs" >27</text>
<text x="32.2" y="223.9" font-size="20.8" fill="#1f4e78" font-weight="bold" textLength="86.3" lengthAdjust="spacingAndGlyphs" >Synthèse</text>
<rect x="29" y="251" width="386" height="26" fill="#e7e6e6" />
<text x="31.3" y="269.2" font-size="14" fill="#000" font-weight="bold" textLength="103.6" lengthAdjust="spacingAndGlyphs" >Résumé annuel</text>
<text x="31.0" y="292.8" font-size="14" fill="#000" textLength="86.8" lengthAdjust="spacingAndGlyphs" >Total revenus</text>
<text x="412.2" y="292.8" font-size="14" fill="#000" font-weight="bold" text-anchor="end" textLength="40.3" lengthAdjust="spacingAndGlyphs" >0,00 €</text>
<text x="31.0" y="313.8" font-size="14" fill="#000" textLength="98.2" lengthAdjust="spacingAndGlyphs" >Total dépenses</text>
<text x="412.2" y="313.8" font-size="14" fill="#000" font-weight="bold" text-anchor="end" textLength="40.3" lengthAdjust="spacingAndGlyphs" >0,00 €</text>
<text x="31.0" y="334.8" font-size="14" fill="#000" textLength="169.6" lengthAdjust="spacingAndGlyphs" >Épargne cible (mensuelle)</text>
<text x="412.2" y="334.8" font-size="14" fill="#000" font-weight="bold" text-anchor="end" textLength="40.3" lengthAdjust="spacingAndGlyphs" >0,00 €</text>
<svg x="29" y="335.8" width="222" height="26" overflow="hidden"><text x="2" y="20" font-size="14" fill="#000" textLength="238.6" lengthAdjust="spacingAndGlyphs">Solde estimé (avant solde de départ)</text></svg>
<text x="412.2" y="355.8" font-size="14" fill="#000" font-weight="bold" text-anchor="end" textLength="40.3" lengthAdjust="spacingAndGlyphs" >0,00 €</text>
<rect x="29" y="381" width="788" height="25" fill="#e7e6e6" />
<text x="31.5" y="398.7" font-size="14" fill="#000" font-weight="bold" >Résumé mensuel (revenus / dépenses)</text>
<rect x="29" y="406" width="788" height="43" fill="#1f4e78" />
<text x="140.0" y="433.2" font-size="14" fill="#fff" font-weight="bold" text-anchor="middle" textLength="60.5" lengthAdjust="spacingAndGlyphs" >Mois (n°)</text>
<text x="333.0" y="433.2" font-size="14" fill="#fff" font-weight="bold" text-anchor="middle" >Mois</text>
<text x="481.8" y="433.2" font-size="14" fill="#fff" font-weight="bold" text-anchor="middle" textLength="56.8" lengthAdjust="spacingAndGlyphs" >Revenus</text>
<text x="615.0" y="433.2" font-size="14" fill="#fff" font-weight="bold" text-anchor="middle" textLength="63.3" lengthAdjust="spacingAndGlyphs" >Dépenses</text>
<text x="747.5" y="423.0" font-size="14" fill="#fff" font-weight="bold" text-anchor="middle" textLength="77.0" lengthAdjust="spacingAndGlyphs" >Solde (hors</text>
<text x="749.5" y="443.6" font-size="14" fill="#fff" font-weight="bold" text-anchor="middle" >épargne)</text>
<text x="140.0" y="465.0" font-size="14" fill="#000" text-anchor="middle" >1</text>
<text x="254.0" y="465.0" font-size="14" fill="#000" >Janvier</text>
<text x="546.2" y="465.0" font-size="14" fill="#000" text-anchor="end" textLength="40.0" lengthAdjust="spacingAndGlyphs" >0,00 €</text>
<text x="680.0" y="465.0" font-size="14" fill="#000" text-anchor="end" textLength="40.0" lengthAdjust="spacingAndGlyphs" >0,00 €</text>
<text x="814.0" y="465.0" font-size="14" fill="#000" text-anchor="end" textLength="40.0" lengthAdjust="spacingAndGlyphs" >0,00 €</text>
<text x="140.0" y="486.0" font-size="14" fill="#000" text-anchor="middle" >2</text>
<text x="254.0" y="486.0" font-size="14" fill="#000" >Février</text>
<text x="546.2" y="486.0" font-size="14" fill="#000" text-anchor="end" textLength="40.0" lengthAdjust="spacingAndGlyphs" >0,00 €</text>
<text x="680.0" y="486.0" font-size="14" fill="#000" text-anchor="end" textLength="40.0" lengthAdjust="spacingAndGlyphs" >0,00 €</text>
<text x="814.0" y="486.0" font-size="14" fill="#000" text-anchor="end" textLength="40.0" lengthAdjust="spacingAndGlyphs" >0,00 €</text>
<text x="140.0" y="507.0" font-size="14" fill="#000" text-anchor="middle" >3</text>
<text x="254.0" y="507.0" font-size="14" fill="#000" >Mars</text>
<text x="546.2" y="507.0" font-size="14" fill="#000" text-anchor="end" textLength="40.0" lengthAdjust="spacingAndGlyphs" >0,00 €</text>
<text x="680.0" y="507.0" font-size="14" fill="#000" text-anchor="end" textLength="40.0" lengthAdjust="spacingAndGlyphs" >0,00 €</text>
<text x="814.0" y="507.0" font-size="14" fill="#000" text-anchor="end" textLength="40.0" lengthAdjust="spacingAndGlyphs" >0,00 €</text>
<text x="140.0" y="528.0" font-size="14" fill="#000" text-anchor="middle" >4</text>
<text x="254.0" y="528.0" font-size="14" fill="#000" >Avril</text>
<text x="546.2" y="528.0" font-size="14" fill="#000" text-anchor="end" textLength="40.0" lengthAdjust="spacingAndGlyphs" >0,00 €</text>
<text x="680.0" y="528.0" font-size="14" fill="#000" text-anchor="end" textLength="40.0" lengthAdjust="spacingAndGlyphs" >0,00 €</text>
<text x="814.0" y="528.0" font-size="14" fill="#000" text-anchor="end" textLength="40.0" lengthAdjust="spacingAndGlyphs" >0,00 €</text>
<text x="140.0" y="549.0" font-size="14" fill="#000" text-anchor="middle" >5</text>
<text x="254.0" y="549.0" font-size="14" fill="#000" >Mai</text>
<text x="546.2" y="549.0" font-size="14" fill="#000" text-anchor="end" textLength="40.0" lengthAdjust="spacingAndGlyphs" >0,00 €</text>
<text x="680.0" y="549.0" font-size="14" fill="#000" text-anchor="end" textLength="40.0" lengthAdjust="spacingAndGlyphs" >0,00 €</text>
<text x="814.0" y="549.0" font-size="14" fill="#000" text-anchor="end" textLength="40.0" lengthAdjust="spacingAndGlyphs" >0,00 €</text>
<text x="140.0" y="570.0" font-size="14" fill="#000" text-anchor="middle" >6</text>
<text x="254.0" y="570.0" font-size="14" fill="#000" >Juin</text>
<text x="546.2" y="570.0" font-size="14" fill="#000" text-anchor="end" textLength="40.0" lengthAdjust="spacingAndGlyphs" >0,00 €</text>
<text x="680.0" y="570.0" font-size="14" fill="#000" text-anchor="end" textLength="40.0" lengthAdjust="spacingAndGlyphs" >0,00 €</text>
<text x="814.0" y="570.0" font-size="14" fill="#000" text-anchor="end" textLength="40.0" lengthAdjust="spacingAndGlyphs" >0,00 €</text>
<text x="140.0" y="591.0" font-size="14" fill="#000" text-anchor="middle" >7</text>
<text x="254.0" y="591.0" font-size="14" fill="#000" >Juillet</text>
<text x="546.2" y="591.0" font-size="14" fill="#000" text-anchor="end" textLength="40.0" lengthAdjust="spacingAndGlyphs" >0,00 €</text>
<text x="680.0" y="591.0" font-size="14" fill="#000" text-anchor="end" textLength="40.0" lengthAdjust="spacingAndGlyphs" >0,00 €</text>
<text x="814.0" y="591.0" font-size="14" fill="#000" text-anchor="end" textLength="40.0" lengthAdjust="spacingAndGlyphs" >0,00 €</text>
<text x="140.0" y="612.0" font-size="14" fill="#000" text-anchor="middle" >8</text>
<text x="254.0" y="612.0" font-size="14" fill="#000" >Août</text>
<text x="546.2" y="612.0" font-size="14" fill="#000" text-anchor="end" textLength="40.0" lengthAdjust="spacingAndGlyphs" >0,00 €</text>
<text x="680.0" y="612.0" font-size="14" fill="#000" text-anchor="end" textLength="40.0" lengthAdjust="spacingAndGlyphs" >0,00 €</text>
<text x="814.0" y="612.0" font-size="14" fill="#000" text-anchor="end" textLength="40.0" lengthAdjust="spacingAndGlyphs" >0,00 €</text>
<text x="140.0" y="633.0" font-size="14" fill="#000" text-anchor="middle" >9</text>
<text x="254.0" y="633.0" font-size="14" fill="#000" >Septembre</text>
<text x="546.2" y="633.0" font-size="14" fill="#000" text-anchor="end" textLength="40.0" lengthAdjust="spacingAndGlyphs" >0,00 €</text>
<text x="680.0" y="633.0" font-size="14" fill="#000" text-anchor="end" textLength="40.0" lengthAdjust="spacingAndGlyphs" >0,00 €</text>
<text x="814.0" y="633.0" font-size="14" fill="#000" text-anchor="end" textLength="40.0" lengthAdjust="spacingAndGlyphs" >0,00 €</text>
<text x="140.0" y="654.0" font-size="14" fill="#000" text-anchor="middle" >10</text>
<text x="254.0" y="654.0" font-size="14" fill="#000" >Octobre</text>
<text x="546.2" y="654.0" font-size="14" fill="#000" text-anchor="end" textLength="40.0" lengthAdjust="spacingAndGlyphs" >0,00 €</text>
<text x="680.0" y="654.0" font-size="14" fill="#000" text-anchor="end" textLength="40.0" lengthAdjust="spacingAndGlyphs" >0,00 €</text>
<text x="814.0" y="654.0" font-size="14" fill="#000" text-anchor="end" textLength="40.0" lengthAdjust="spacingAndGlyphs" >0,00 €</text>
<text x="140.0" y="675.0" font-size="14" fill="#000" text-anchor="middle" >11</text>
<text x="254.0" y="675.0" font-size="14" fill="#000" >Novembre</text>
<text x="546.2" y="675.0" font-size="14" fill="#000" text-anchor="end" textLength="40.0" lengthAdjust="spacingAndGlyphs" >0,00 €</text>
<text x="680.0" y="675.0" font-size="14" fill="#000" text-anchor="end" textLength="40.0" lengthAdjust="spacingAndGlyphs" >0,00 €</text>
<text x="814.0" y="675.0" font-size="14" fill="#000" text-anchor="end" textLength="40.0" lengthAdjust="spacingAndGlyphs" >0,00 €</text>
<text x="140.0" y="696.0" font-size="14" fill="#000" text-anchor="middle" >12</text>
<text x="254.0" y="696.0" font-size="14" fill="#000" >Décembre</text>
<text x="546.2" y="696.0" font-size="14" fill="#000" text-anchor="end" textLength="40.0" lengthAdjust="spacingAndGlyphs" >0,00 €</text>
<text x="680.0" y="696.0" font-size="14" fill="#000" text-anchor="end" textLength="40.0" lengthAdjust="spacingAndGlyphs" >0,00 €</text>
<text x="814.0" y="696.0" font-size="14" fill="#000" text-anchor="end" textLength="40.0" lengthAdjust="spacingAndGlyphs" >0,00 €</text>
<rect x="947.5" y="380.5" width="469" height="331" rx="13" ry="13" fill="#fff" stroke="#8c8c8c" stroke-width="1.1"/>
<text x="1181.3" y="415.0" font-size="24" fill="#000" text-anchor="middle" textLength="253.5" lengthAdjust="spacingAndGlyphs" >Revenus vs Dépenses</text>
<text x="1181.6" y="443.8" font-size="24" fill="#000" text-anchor="middle" textLength="113.8" lengthAdjust="spacingAndGlyphs" >(mensuel)</text>
<text x="994.0" y="471.0" font-size="12.2" fill="#000" text-anchor="end" textLength="35.0" lengthAdjust="spacingAndGlyphs" >1,00 €</text>
<text x="994.0" y="487.8" font-size="12.2" fill="#000" text-anchor="end" textLength="35.0" lengthAdjust="spacingAndGlyphs" >0,90 €</text>
<text x="994.0" y="504.6" font-size="12.2" fill="#000" text-anchor="end" textLength="35.0" lengthAdjust="spacingAndGlyphs" >0,80 €</text>
<text x="994.0" y="521.4" font-size="12.2" fill="#000" text-anchor="end" textLength="35.0" lengthAdjust="spacingAndGlyphs" >0,70 €</text>
<text x="994.0" y="538.2" font-size="12.2" fill="#000" text-anchor="end" textLength="35.0" lengthAdjust="spacingAndGlyphs" >0,60 €</text>
<text x="994.0" y="555.0" font-size="12.2" fill="#000" text-anchor="end" textLength="35.0" lengthAdjust="spacingAndGlyphs" >0,50 €</text>
<text x="994.0" y="571.8" font-size="12.2" fill="#000" text-anchor="end" textLength="35.0" lengthAdjust="spacingAndGlyphs" >0,40 €</text>
<text x="994.0" y="588.6" font-size="12.2" fill="#000" text-anchor="end" textLength="35.0" lengthAdjust="spacingAndGlyphs" >0,30 €</text>
<text x="994.0" y="605.4" font-size="12.2" fill="#000" text-anchor="end" textLength="35.0" lengthAdjust="spacingAndGlyphs" >0,20 €</text>
<text x="994.0" y="622.2" font-size="12.2" fill="#000" text-anchor="end" textLength="35.0" lengthAdjust="spacingAndGlyphs" >0,10 €</text>
<text x="994.0" y="639.0" font-size="12.2" fill="#000" text-anchor="end" textLength="35.0" lengthAdjust="spacingAndGlyphs" >0,00 €</text>
<line x1="1007.5" y1="467" x2="1007.5" y2="636" stroke="#000" stroke-width="1.3" />
<line x1="1007" y1="635.5" x2="1400" y2="635.5" stroke="#000" stroke-width="1.3" />
<text x="0" y="0" font-size="12.4" fill="#000" text-anchor="end" textLength="42.0" lengthAdjust="spacingAndGlyphs" transform="translate(1026.9 654.0) rotate(-45)">Janvier</text>
<text x="0" y="0" font-size="12.4" fill="#000" text-anchor="end" textLength="40.5" lengthAdjust="spacingAndGlyphs" transform="translate(1059.6 654.0) rotate(-45)">Février</text>
<text x="0" y="0" font-size="12.4" fill="#000" text-anchor="end" textLength="28.9" lengthAdjust="spacingAndGlyphs" transform="translate(1092.3 654.0) rotate(-45)">Mars</text>
<text x="0" y="0" font-size="12.4" fill="#000" text-anchor="end" textLength="25.1" lengthAdjust="spacingAndGlyphs" transform="translate(1124.9 654.0) rotate(-45)">Avril</text>
<text x="0" y="0" font-size="12.4" fill="#000" text-anchor="end" textLength="21.0" lengthAdjust="spacingAndGlyphs" transform="translate(1157.6 654.0) rotate(-45)">Mai</text>
<text x="0" y="0" font-size="12.4" fill="#000" text-anchor="end" textLength="23.9" lengthAdjust="spacingAndGlyphs" transform="translate(1190.3 654.0) rotate(-45)">Juin</text>
<text x="0" y="0" font-size="12.4" fill="#000" text-anchor="end" textLength="33.3" lengthAdjust="spacingAndGlyphs" transform="translate(1222.9 654.0) rotate(-45)">Juillet</text>
<text x="0" y="0" font-size="12.4" fill="#000" text-anchor="end" textLength="26.8" lengthAdjust="spacingAndGlyphs" transform="translate(1255.6 654.0) rotate(-45)">Août</text>
<text x="0" y="0" font-size="12.4" fill="#000" text-anchor="end" textLength="63.7" lengthAdjust="spacingAndGlyphs" transform="translate(1288.3 654.0) rotate(-45)">Septembre</text>
<text x="0" y="0" font-size="12.4" fill="#000" text-anchor="end" textLength="46.3" lengthAdjust="spacingAndGlyphs" transform="translate(1321.0 654.0) rotate(-45)">Octobre</text>
<text x="0" y="0" font-size="12.4" fill="#000" text-anchor="end" textLength="60.1" lengthAdjust="spacingAndGlyphs" transform="translate(1353.6 654.0) rotate(-45)">Novembre</text>
<text x="0" y="0" font-size="12.4" fill="#000" text-anchor="end" textLength="60.1" lengthAdjust="spacingAndGlyphs" transform="translate(1386.3 654.0) rotate(-45)">Décembre</text>
<rect x="1335" y="564" width="8" height="8" fill="#4f81bd" />
<rect x="1335" y="590" width="8" height="8" fill="#c0504d" />
<text x="1346.0" y="572.0" font-size="12.2" fill="#000" textLength="48.0" lengthAdjust="spacingAndGlyphs" >Revenus</text>
<text x="1346.5" y="597.0" font-size="12.2" fill="#000" textLength="54.5" lengthAdjust="spacingAndGlyphs" >Dépenses</text>
</svg>
</body></html>
